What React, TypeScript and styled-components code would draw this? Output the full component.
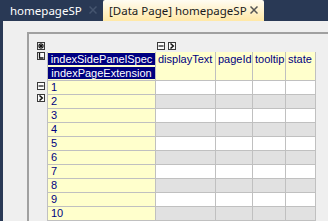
import React from 'react';
import styled, { createGlobalStyle } from 'styled-components';

const GlobalStyle = createGlobalStyle`
  html, body {
    margin: 0;
    padding: 0;
    background: #efefef;
  }
  body {
    width: 328px;
    height: 221px;
    overflow: hidden;
  }
`;

const Window = styled.div`
  display: flex;
  flex-direction: column;
  width: 328px;
  height: 221px;
  overflow: hidden;
`;

const TabStrip = styled.div`
  display: flex;
  flex: none;
  height: 21px;
  background: #293955;
`;

const Tab = styled.div<{ $active?: boolean }>`
  display: flex;
  align-items: center;
  box-sizing: border-box;
  height: 21px;
  width: ${p => (p.$active ? '161px' : '103px')};
  padding: 0 6px 1px ${p => (p.$active ? '6px' : '10px')};
  font-family: 'Noto Sans', 'Open Sans', sans-serif;
  font-size: 11.5px;
  color: ${p => (p.$active ? '#1b1b1b' : '#ffffff')};
  background: ${p => (p.$active ? 'linear-gradient(#fffcf2, #ffe8a6)' : 'transparent')};
  border-radius: 2px 2px 0 0;
`;

const TabLabel = styled.span`
  flex: 1;
  white-space: nowrap;
`;

const Close = styled.svg<{ $active?: boolean }>`
  width: 8px;
  height: 8px;
  flex: none;
  stroke: ${p => (p.$active ? '#555555' : '#45556f')};
  stroke-width: 1.5;
`;

const Body = styled.div`
  flex: 1;
  background: #efefef;
  border-left: 3px solid #293955;
  padding: 11px 0 0 24px;
  overflow: hidden;
`;

const Panel = styled.div`
  height: 100%;
  border-top: 2px solid #a0a0a0;
  border-left: 2px solid #a0a0a0;
  padding: 8px 0 0 8px;
`;

const TopRow = styled.div`
  display: flex;
  height: 10px;
`;

const ColumnControls = styled.div`
  display: flex;
  gap: 3px;
  margin-left: 112px;
`;

const Main = styled.div`
  display: flex;
`;

const SideColumn = styled.div`
  display: grid;
  grid-template-columns: 10px;
  grid-template-rows: 28px repeat(10, 13px);
  row-gap: 1px;
  align-items: start;
`;

const CtrlBox = styled.span<{ $shift?: number }>`
  display: flex;
  align-items: center;
  justify-content: center;
  box-sizing: border-box;
  width: 8px;
  height: 8px;
  margin-top: ${p => p.$shift ?? 0}px;
  border: 1px solid #3a3a3a;
  background: #fbfbfb;

  svg {
    width: 6px;
    height: 6px;
    stroke: #111111;
    fill: none;
  }
`;

const Grid = styled.div`
  display: grid;
  grid-template-columns: 107px 59px 36px 32px 29px;
  grid-template-rows: 28px;
  grid-auto-rows: 13px;
  gap: 1px;
  width: max-content;
  padding: 0 1px 1px 1px;
  background: #c0c0c0;
  font-family: 'Liberation Sans', Arial, sans-serif;
  font-size: 11px;
  line-height: 13px;
  color: #000080;
`;

type CellKind = 'head' | 'key' | 'odd' | 'even';

const cellBg: Record<CellKind, string> = {
  head: '#ffffcc',
  key: '#ffffcc',
  odd: '#ffffff',
  even: '#e1e1e1',
};

const Cell = styled.div<{ $kind: CellKind }>`
  background: ${p => cellBg[p.$kind]};
  padding: ${p => (p.$kind === 'head' ? '1px 0 0 2px' : p.$kind === 'key' ? '0 0 0 3px' : '0')};
  white-space: nowrap;
  overflow: hidden;
`;

const KeyHead = styled.div`
  display: flex;
  flex-direction: column;
  gap: 2px;
  padding-top: 1px;
  background: #ffffcc;
`;

const KeyLabel = styled.div`
  height: 12px;
  line-height: 12px;
  background: #000080;
  color: #ffffff;
  text-align: center;
  white-space: nowrap;
  overflow: hidden;
`;

const Glyph = ({ kind }: { kind: 'star' | 'L' | 'minus' | 'next' }) => (
  <svg viewBox="0 0 6 6">
    {kind === 'star' && (
      <g strokeWidth="1.2">
        <line x1="3" y1="0" x2="3" y2="6" />
        <line x1="0" y1="3" x2="6" y2="3" />
        <line x1="0.8" y1="0.8" x2="5.2" y2="5.2" />
        <line x1="5.2" y1="0.8" x2="0.8" y2="5.2" />
      </g>
    )}
    {kind === 'L' && <polyline points="1.5,0 1.5,5 5.5,5" strokeWidth="1.3" />}
    {kind === 'minus' && <line x1="0.5" y1="3" x2="5.5" y2="3" strokeWidth="1.2" />}
    {kind === 'next' && <polyline points="1.5,0.5 4.3,3 1.5,5.5" strokeWidth="1.5" />}
  </svg>
);

const columns = ['displayText', 'pageId', 'tooltip', 'state'];
const rows = [1, 2, 3, 4, 5, 6, 7, 8, 9, 10];

export default function App() {
  return (
    <>
      <GlobalStyle />
      <Window>
        <TabStrip>
          <Tab>
            <TabLabel>homepageSP</TabLabel>
            <Close viewBox="0 0 8 8">
              <line x1="0.5" y1="0.5" x2="7.5" y2="7.5" />
              <line x1="7.5" y1="0.5" x2="0.5" y2="7.5" />
            </Close>
          </Tab>
          <Tab $active>
            <TabLabel>[Data Page] homepageSP</TabLabel>
            <Close $active viewBox="0 0 8 8">
              <line x1="0.5" y1="0.5" x2="7.5" y2="7.5" />
              <line x1="7.5" y1="0.5" x2="0.5" y2="7.5" />
            </Close>
          </Tab>
        </TabStrip>
        <Body>
          <Panel>
            <TopRow>
              <CtrlBox><Glyph kind="star" /></CtrlBox>
              <ColumnControls>
                <CtrlBox><Glyph kind="minus" /></CtrlBox>
                <CtrlBox><Glyph kind="next" /></CtrlBox>
              </ColumnControls>
            </TopRow>
            <Main>
              <SideColumn>
                <CtrlBox><Glyph kind="L" /></CtrlBox>
                <CtrlBox $shift={1}><Glyph kind="minus" /></CtrlBox>
                <CtrlBox $shift={-1}><Glyph kind="next" /></CtrlBox>
              </SideColumn>
              <Grid>
                <KeyHead>
                  <KeyLabel>indexSidePanelSpec</KeyLabel>
                  <KeyLabel>indexPageExtension</KeyLabel>
                </KeyHead>
                {columns.map(c => (
                  <Cell key={c} $kind="head">{c}</Cell>
                ))}
                {rows.map(r => (
                  <React.Fragment key={r}>
                    <Cell $kind="key">{r}</Cell>
                    {columns.map(c => (
                      <Cell key={c} $kind={r % 2 ? 'odd' : 'even'} />
                    ))}
                  </React.Fragment>
                ))}
              </Grid>
            </Main>
          </Panel>
        </Body>
      </Window>
    </>
  );
}
